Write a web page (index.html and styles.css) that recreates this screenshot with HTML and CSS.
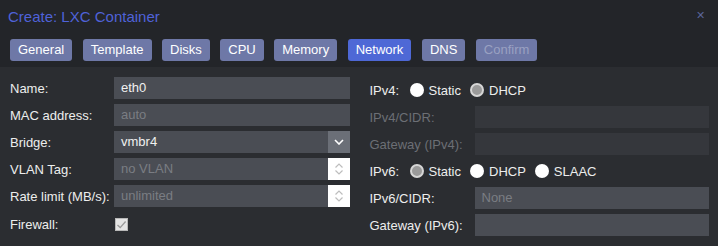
FILE: index.html
```html
<!DOCTYPE html>
<html lang="en">
<head>
  <meta charset="UTF-8">
  <title>Create: LXC Container</title>
  <link rel="stylesheet" href="styles.css">
</head>
<body>
  <div class="dialog">
    <div class="header">
      <span class="title">Create: LXC Container</span>
      <span class="close">&#x2715;</span>
    </div>

    <div class="tabs">
      <span class="tab">General</span>
      <span class="tab">Template</span>
      <span class="tab">Disks</span>
      <span class="tab">CPU</span>
      <span class="tab">Memory</span>
      <span class="tab active">Network</span>
      <span class="tab">DNS</span>
      <span class="tab disabled">Confirm</span>
    </div>

    <div class="body">
      <div class="col left">
        <div class="row">
          <label>Name:</label>
          <div class="field">eth0</div>
        </div>
        <div class="row">
          <label>MAC address:</label>
          <div class="field empty">auto</div>
        </div>
        <div class="row">
          <label>Bridge:</label>
          <div class="field">vmbr4<span class="trigger">
            <svg width="10" height="6" viewBox="0 0 10 6"><path d="M1 1 L5 5 L9 1" fill="none" stroke="#fff" stroke-width="1.6"/></svg>
          </span></div>
        </div>
        <div class="row">
          <label>VLAN Tag:</label>
          <div class="field empty">no VLAN<span class="spinner">
            <svg width="10" height="16" viewBox="0 0 10 16"><path d="M1.5 6.5 L5 3 L8.5 6.5 M1.5 9.5 L5 13 L8.5 9.5" fill="none" stroke="#bdbdbd" stroke-width="1.2"/></svg>
          </span></div>
        </div>
        <div class="row">
          <label>Rate limit (MB/s):</label>
          <div class="field empty">unlimited<span class="spinner">
            <svg width="10" height="16" viewBox="0 0 10 16"><path d="M1.5 6.5 L5 3 L8.5 6.5 M1.5 9.5 L5 13 L8.5 9.5" fill="none" stroke="#bdbdbd" stroke-width="1.2"/></svg>
          </span></div>
        </div>
        <div class="row check-row">
          <label>Firewall:</label>
          <span class="checkbox">
            <svg width="11" height="11" viewBox="0 0 11 11"><path d="M1.5 6 L4.2 8.6 L9.6 2.5" fill="none" stroke="#9a9a9a" stroke-width="1.4"/></svg>
          </span>
        </div>
      </div>

      <div class="col right">
        <div class="row radio-row">
          <label>IPv4:</label>
          <span class="radio"></span><span class="opt">Static</span>
          <span class="radio on"></span><span class="opt">DHCP</span>
        </div>
        <div class="row">
          <label class="off">IPv4/CIDR:</label>
          <div class="field disabled"></div>
        </div>
        <div class="row">
          <label class="off">Gateway (IPv4):</label>
          <div class="field disabled"></div>
        </div>
        <div class="row radio-row">
          <label>IPv6:</label>
          <span class="radio on"></span><span class="opt">Static</span>
          <span class="radio"></span><span class="opt">DHCP</span>
          <span class="radio"></span><span class="opt">SLAAC</span>
        </div>
        <div class="row">
          <label>IPv6/CIDR:</label>
          <div class="field empty">None</div>
        </div>
        <div class="row">
          <label>Gateway (IPv6):</label>
          <div class="field"></div>
        </div>
      </div>
    </div>
  </div>
</body>
</html>
```

FILE: styles.css
```css
body { margin: 0; background: #2b2d31; font-family: "Liberation Sans", Arial, sans-serif; font-size: 13px; color: #ededed; }
.dialog { width: 718px; height: 246px; }

.header { background: #232529; height: 30px; display: flex; align-items: center; justify-content: space-between; padding: 0 13px 0 8px; }
.title { color: #4f62d8; font-size: 15px; padding-top: 2px; }
.close { color: #5a6498; font-size: 11px; }

.tabs { background: #232529; height: 37px; padding: 9px 0 0 10px; box-sizing: border-box; display: flex; align-items: flex-start; gap: 10.5px; }
.tab { height: 22px; line-height: 22px; padding: 0 8px; background: #6e78a7; color: #fff; border-radius: 3px; }
.tab.active { background: #4e68d6; }
.tab.disabled { color: #9aa1c2; }

.body { display: flex; gap: 20px; padding: 10px 9px 0 10px; }
.col { flex: 1; }
.right { padding-top: 2px; }

.row { display: flex; align-items: center; height: 22px; margin-bottom: 5px; }
.row label { width: 104px; flex: none; white-space: nowrap; }
.right .row label { width: 105px; }
.row label.off { color: #6c6f75; }

.field { flex: 1; height: 22px; line-height: 22px; background: #4a4d54; padding-left: 7px; position: relative; color: #f0f0f0; }
.field.empty { color: #7a7d83; }
.field.disabled { background: #35373c; }

.trigger { position: absolute; right: 0; top: 0; width: 22px; height: 22px; background: #6b6f77; display: flex; align-items: center; justify-content: center; }
.spinner { position: absolute; right: 0; top: 0; width: 22px; height: 22px; background: #fff; display: flex; align-items: center; justify-content: center; }

.check-row { margin-top: 6px; }
.checkbox { width: 11px; height: 11px; border: 1px solid #b8b8b8; background: #e4e4e4; display: flex; align-items: center; justify-content: center; margin-left: 1px; }

.right .radio-row label { width: 40px; }
.radio { width: 14px; height: 14px; border-radius: 50%; background: #fff; box-sizing: border-box; margin-right: 5px; flex: none; }
.radio.on { background: #9a9a9a; border: 2px solid #d6d6d6; }
.opt { margin-right: 9px; }
```
